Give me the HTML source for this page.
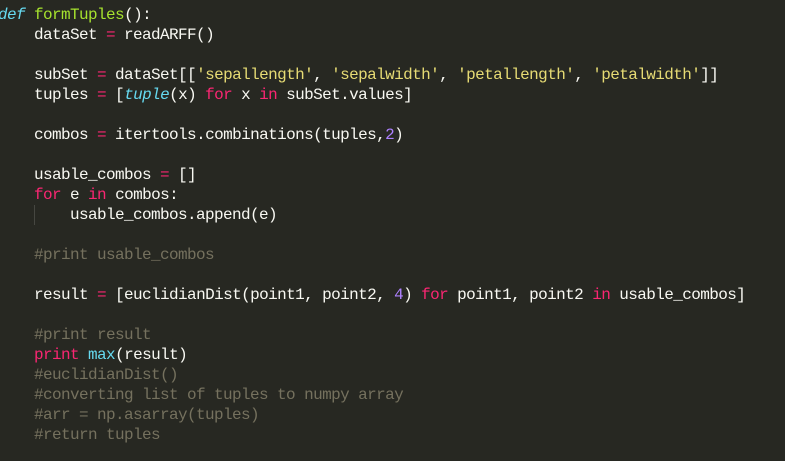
<!DOCTYPE html>
<html><head><meta charset="utf-8"><style>
html,body{margin:0;padding:0;background:#272822;width:785px;height:461px;overflow:hidden}
pre{position:absolute;left:-2px;top:5px;margin:0;font-family:"Liberation Mono",monospace;font-size:16px;letter-spacing:-0.6px;line-height:20px;color:#f8f8f2}
.k{color:#f92672}.f{color:#a6e22e}.s{color:#e6db74}.n{color:#ae81ff}.c{color:#75715e}.b{color:#66d9ef}.i{color:#66d9ef;font-style:italic}
.g{position:absolute;left:34px;top:205px;width:1px;height:20px;background:#464741}
</style></head><body>
<div class="g"></div>
<pre><span class="i">def</span> <span class="f">formTuples</span>():
    dataSet <span class="k">=</span> readARFF()

    subSet <span class="k">=</span> dataSet[[<span class="s">'sepallength'</span>, <span class="s">'sepalwidth'</span>, <span class="s">'petallength'</span>, <span class="s">'petalwidth'</span>]]
    tuples <span class="k">=</span> [<span class="i">tuple</span>(x) <span class="k">for</span> x <span class="k">in</span> subSet.values]

    combos <span class="k">=</span> itertools.combinations(tuples,<span class="n">2</span>)

    usable_combos <span class="k">=</span> []
    <span class="k">for</span> e <span class="k">in</span> combos:
        usable_combos.append(e)

    <span class="c">#print usable_combos</span>

    result <span class="k">=</span> [euclidianDist(point1, point2, <span class="n">4</span>) <span class="k">for</span> point1, point2 <span class="k">in</span> usable_combos]

    <span class="c">#print result</span>
    <span class="k">print</span> <span class="b">max</span>(result)
    <span class="c">#euclidianDist()</span>
    <span class="c">#converting list of tuples to numpy array</span>
    <span class="c">#arr = np.asarray(tuples)</span>
    <span class="c">#return tuples</span>
</pre>
</body></html>
